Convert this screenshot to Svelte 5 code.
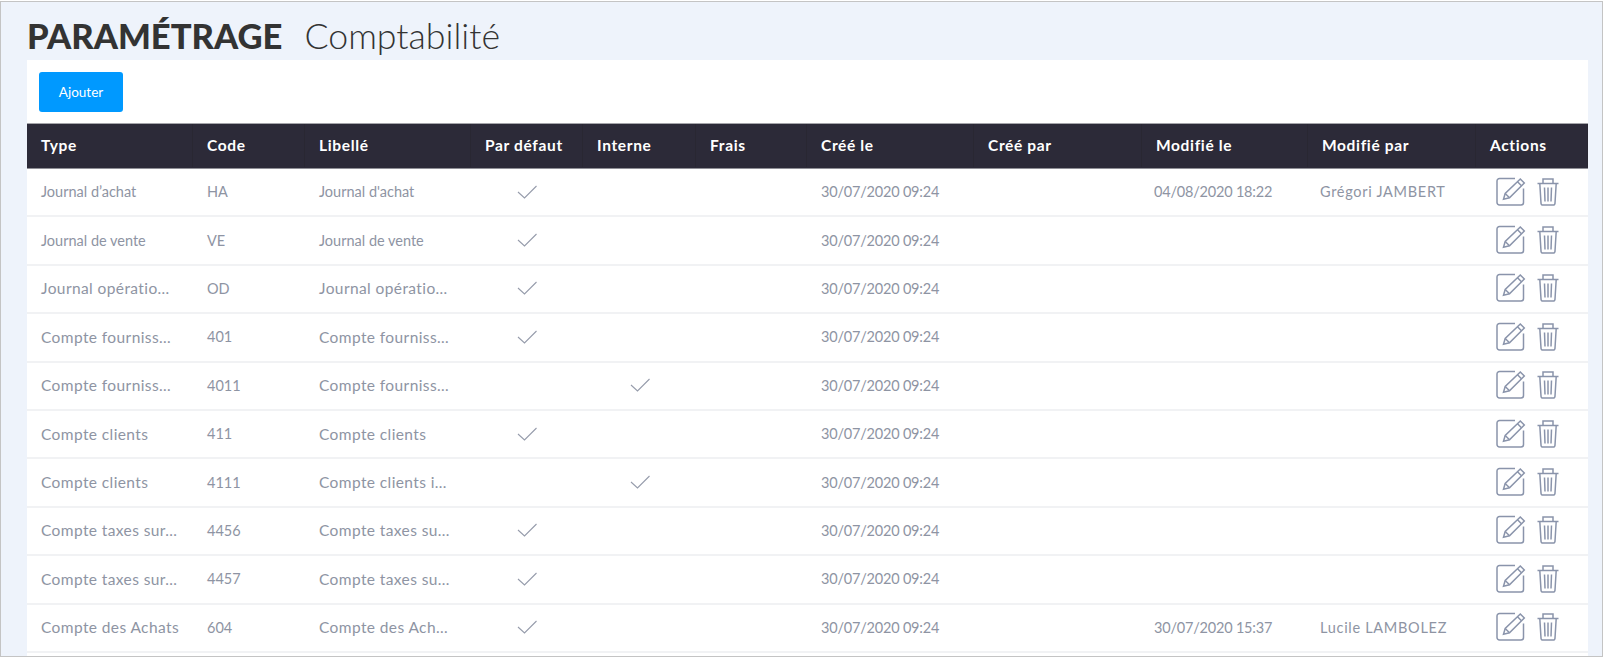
<script>
  const rows = [
    ["Journal d’achat","HA","Journal d'achat",1,0,"04/08/2020 18:22","Grégori JAMBERT"],
    ["Journal de vente","VE","Journal de vente",1,0,"",""],
    ["Journal opératio…","OD","Journal opératio…",1,0,"",""],
    ["Compte fourniss…","401","Compte fourniss…",1,0,"",""],
    ["Compte fourniss…","4011","Compte fourniss…",0,1,"",""],
    ["Compte clients","411","Compte clients",1,0,"",""],
    ["Compte clients","4111","Compte clients i…",0,1,"",""],
    ["Compte taxes sur…","4456","Compte taxes su…",1,0,"",""],
    ["Compte taxes sur…","4457","Compte taxes su…",1,0,"",""],
    ["Compte des Achats","604","Compte des Ach…",1,0,"30/07/2020 15:37","Lucile LAMBOLEZ"]
  ];
  const heads = ["Type","Code","Libellé","Par défaut","Interne","Frais","Créé le","Créé par","Modifié le","Modifié par","Actions"];
  const wide = (t) => t.startsWith("Compte") || t.includes("…");
</script>

{#snippet check()}
  <svg class="check" width="20" height="14" viewBox="0 0 20 14"><path d="M1 7 L7.500 13 L19.500 1" fill="none" stroke="#969cab" stroke-width="1.1"/></svg>
{/snippet}

<div class="frame">
  <h1 class="title"><b>PARAMÉTRAGE</b><span>Comptabilité</span></h1>
  <div class="card">
    <div class="toolbar"><button class="add">Ajouter</button></div>
    <div class="row head">
      {#each heads as h}<div class="cell">{h}</div>{/each}
    </div>
    {#each rows as r}
      <div class="row body">
        <div class="cell" class:wide={wide(r[0])}>{r[0]}</div>
        <div class="cell">{r[1]}</div>
        <div class="cell" class:wide={wide(r[2])}>{r[2]}</div>
        <div class="cell mid">{#if r[3]}{@render check()}{/if}</div>
        <div class="cell mid">{#if r[4]}{@render check()}{/if}</div>
        <div class="cell"></div>
        <div class="cell date">30/07/2020 09:24</div>
        <div class="cell"></div>
        <div class="cell date back">{r[5]}</div>
        <div class="cell name back">{r[6]}</div>
        <div class="cell actions">
          <svg width="30" height="30" viewBox="0 0 30 30" fill="none" stroke="#8a94ab" stroke-width="1.5">
            <path d="M27.500 11.500V25.500a2.500 2.500 0 0 1-2.500 2.500H3.500A2.500 2.500 0 0 1 1 25.500V4A2.500 2.500 0 0 1 3.500 1.500H19"/>
            <path d="M24.300 2 28.300 6 13.500 20.800 7.500 22.300 9.200 16.500Z"/>
            <path d="M21.500 4.800 25.500 8.800M9.200 16.500 13.500 20.800"/>
          </svg>
          <svg width="22" height="28" viewBox="0 0 22 28" fill="none" stroke="#8a94ab" stroke-width="1.5">
            <path d="M.5 5.500H21.500M6 5.500V1H16V5.500M2.800 5.500 4 25a1.800 1.800 0 0 0 1.800 2H16.200A1.800 1.800 0 0 0 18 25L19.200 5.500"/>
            <path d="M7.500 9.500 8 23.500M11 9.500V23.500M14.500 9.500 14 23.500"/>
          </svg>
        </div>
      </div>
    {/each}
  </div>
</div>

<style>
  :global(body) { margin: 0; background: #fff; }
  .frame {
    box-sizing: border-box;
    height: 656px;
    width: 1603px;
    margin-top: 1px;
    border: 1px solid #c4c4c4;
    background: #eef3fb;
    padding: 0 14px 0 26px;
    overflow: hidden;
    font-family: Lato, "Noto Sans", sans-serif;
  }
  .title {
    margin: 0;
    height: 58px;
    display: flex;
    align-items: baseline;
    gap: 22px;
    font-size: 35.7px;
    line-height: 68px;
    color: #333;
    font-weight: 300;
  }
  .title b { font-weight: 900; font-size: 34.6px; }
  .card { background: #fff; height: 600px; }
  .toolbar { height: 63px; padding: 12px 0 0 12px; box-sizing: border-box; }
  .add {
    width: 84px; height: 40px;
    background: #0099ff; color: #fff;
    border: 0; border-radius: 3px;
    font: 400 13.5px Lato, sans-serif;
  }
  .row {
    display: grid;
    grid-template-columns: 166px 112px 166px 112px 113px 111px 167px 168px 166px 168px 1fr;
  }
  .head {
    height: 46px;
    box-sizing: border-box;
    background: #2c2a38;
    border-top: 1px solid #a5a5aa;
    border-bottom: 1px solid #8f8f96;
    color: #fff;
    font-weight: 700;
    font-size: 15.5px;
    letter-spacing: .65px;
    align-items: center;
    padding-bottom: 1px;
  }
  .head .cell { border-right: 1px solid #292732; height: 100%; line-height: 42px; }
  .body {
    height: 48.4px;
    box-sizing: border-box;
    border-bottom: 2px solid #f1f2f4;
    padding-bottom: 1px;
    color: #8e94a3;
    font-size: 14.5px;
    align-items: center;
  }
  .cell {
    padding: 0 14px;
    white-space: nowrap;
    overflow: hidden;
    min-width: 0;
  }
  .wide { font-size: 15.5px; letter-spacing: .4px; padding-right: 0; }
  .date { letter-spacing: -.2px; }
  .back { margin-left: -2px; }
  .name { letter-spacing: .7px; padding-right: 0; }
  .mid { text-align: center; padding: 0; line-height: 0; }
  .check { display: inline-block; }
  .actions { display: flex; align-items: center; gap: 11px; overflow: visible; padding: 0; margin-left: 20px; }
</style>
